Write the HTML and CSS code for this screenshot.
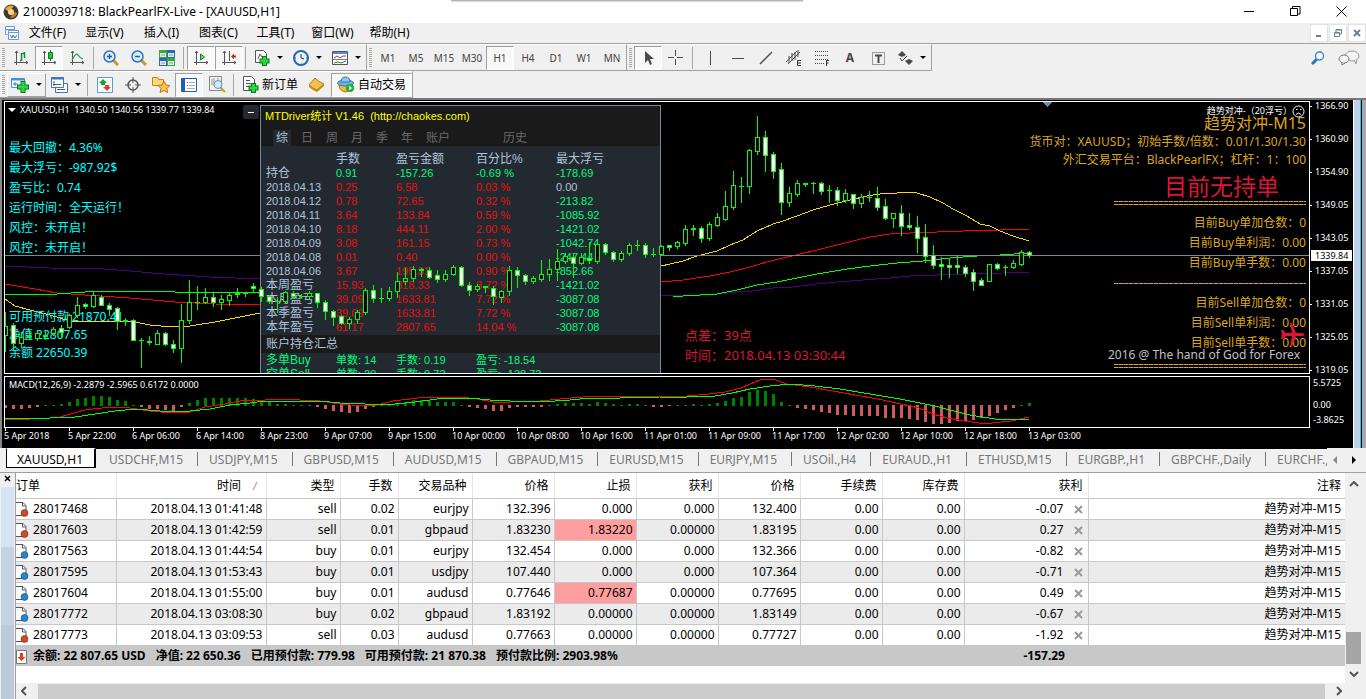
FILE: index.html
```
<!DOCTYPE html>
<html lang="zh-CN">
<head>
    <meta charset="UTF-8">
    <meta name="viewport" content="width=device-width, initial-scale=1.0">
    <title>2100039718: BlackPearlFX-Live - [XAUUSD,H1]</title>
    <link rel="stylesheet" href="styles.css">
</head>
<body>
    <header class="titlebar">
        <svg width="16" height="16" viewBox="0 0 16 16"><circle cx="8" cy="8" r="7.500" fill="#3a3a3a"/><path d="M2 5Q5 0 11 2L6 8Z" fill="#e8a33a"/><path d="M14 9Q13 14 7 14L11 8Z" fill="#c67a1c"/><circle cx="8" cy="8" r="3" fill="#f7d58a"/></svg>
        <span class="caption">2100039718: BlackPearlFX-Live - [XAUUSD,H1]</span>
        <button class="win-btn" aria-label="最小化"><svg width="11" height="11"><path d="M0 5.500h10" stroke="#000"/></svg></button>
        <button class="win-btn" aria-label="还原"><svg width="11" height="11"><path d="M.5 2.500h7v7h-7zM2.500 2v-1.500h7.500v7.500h-2" fill="none" stroke="#000"/></svg></button>
        <button class="win-btn" aria-label="关闭"><svg width="11" height="11"><path d="M.5.5l10 10M10.500.5l-10 10" stroke="#000"/></svg></button>
        <div class="drag-shade"></div>
    </header>

    <nav class="menubar">
        <svg width="14" height="14" viewBox="0 0 14 14"><path d="M.5.5h9v3h-9zM.5 3.500v5h2M3.500 4.500h10v9h-10zM3.500 6.500h10" fill="#fff" stroke="#6a9bd8"/><path d="M5 9l2 3 1-3 2 3 2-3" fill="none" stroke="#3a76c4"/></svg>
        <button>文件(F)</button>
        <button>显示(V)</button>
        <button>插入(I)</button>
        <button>图表(C)</button>
        <button>工具(T)</button>
        <button>窗口(W)</button>
        <button>帮助(H)</button>
        <div class="mdi-btns">
            <button aria-label="最小化子窗口"><svg width="10" height="10"><path d="M2 8h5" stroke="#6c8090" stroke-width="2"/></svg></button>
            <button aria-label="还原子窗口"><svg width="10" height="10"><path d="M1.500 4.500h5v4h-5zM3 4V1.500h5.500V6H7M3 2h6M1 5h6" fill="none" stroke="#6c8090"/></svg></button>
            <button aria-label="关闭子窗口"><svg width="10" height="10"><path d="M2 2l6 6M8 2L2 8" stroke="#6c8090" stroke-width="2"/></svg></button>
        </div>
    </nav>

    <div class="toolbar">
        <div class="group">
            <i class="grip"></i>
            <button class="tool" aria-label="柱状图"><svg width="16" height="16"><path d="M3.500 1v14M1 12.500h14M2 3l1.500-2L5 3M13 11l2 1.500-2 1.500" fill="none" stroke="#555"/><path d="M7 10.500h1.500M8.500 11V3M9 3.500h2M11.500 2v6" fill="none" stroke="#1b8a2f" stroke-width="1.500"/></svg></button>
            <button class="tool on" aria-label="阴阳烛"><svg width="16" height="16"><path d="M3.500 1v14M1 12.500h14M2 3l1.500-2L5 3M13 11l2 1.500-2 1.500" fill="none" stroke="#555"/><path d="M9.500 0v11" stroke="#087a1c"/><path d="M7.500 2.500h4v6h-4z" fill="#25c83c" stroke="#087a1c"/></svg></button>
            <button class="tool" aria-label="折线图"><svg width="16" height="16"><path d="M3.500 1v14M1 12.500h14M2 3l1.500-2L5 3M13 11l2 1.500-2 1.500" fill="none" stroke="#555"/><path d="M3 10Q7 2 9 5t5 4" fill="none" stroke="#2f9d45" stroke-width="1.300"/></svg></button>
            <i class="sep"></i>
            <button class="tool" aria-label="放大"><svg width="16" height="16"><path d="M10 10l5 5" stroke="#c99a1e" stroke-width="3"/><circle cx="6.500" cy="6.500" r="5.500" fill="#d9ecfb" stroke="#2c74c0" stroke-width="1.500"/><path d="M4 6.500h5M6.500 4v5" stroke="#1c5fa8" stroke-width="1.500"/></svg></button>
            <button class="tool" aria-label="缩小"><svg width="16" height="16"><path d="M10 10l5 5" stroke="#c99a1e" stroke-width="3"/><circle cx="6.500" cy="6.500" r="5.500" fill="#d9ecfb" stroke="#2c74c0" stroke-width="1.500"/><path d="M4 6.500h5" stroke="#1c5fa8" stroke-width="1.500"/></svg></button>
            <button class="tool" aria-label="平铺窗口"><svg width="16" height="16"><path d="M0 0h8v8H0zM8 8h8v8H8z" fill="#3fa535"/><path d="M8 0h8v8H8zM0 8h8v8H0z" fill="#2b66c0"/><path d="M1 3h6v4H1zM9 3h6v4H9zM1 11h6v4H1zM9 11h6v4H9z" fill="#d8efe4"/><path d="M2 5h4M10 5h4M2 13h4M10 13h4" stroke="#7aa" /></svg></button>
            <i class="sep"></i>
            <button class="tool on" aria-label="自动滚动"><svg width="16" height="16"><path d="M3.500 1v14M1 12.500h14M2 3l1.500-2L5 3M13 11l2 1.500-2 1.500" fill="none" stroke="#555"/><path d="M7.500 4v6l4-3z" fill="#7ad98a" stroke="#0c7d22"/></svg></button>
            <button class="tool on" aria-label="图表平移"><svg width="16" height="16"><path d="M3.500 1v14M1 12.500h14M2 3l1.500-2L5 3M13 11l2 1.500-2 1.500M8.500 1v10" fill="none" stroke="#555"/><path d="M10 6.500l3-3v2h2v2h-2v2z" fill="#b5341e"/></svg></button>
            <i class="sep"></i>
            <button class="tool drop" aria-label="指标"><svg width="16" height="16"><path d="M1.500.5h8l3 3v9h-11z" fill="#fff" stroke="#555"/><path d="M4 9l2-5 2 3" fill="none" stroke="#555"/><path d="M10.500 6v10M5.500 11h10" stroke="#087a1c" stroke-width="5"/><path d="M10.500 7v8M6.500 11h8" stroke="#2fd446" stroke-width="3"/></svg><b class="caret"></b></button>
            <button class="tool drop" aria-label="周期"><svg width="16" height="16"><circle cx="8" cy="8" r="7" fill="#eef6fd" stroke="#2067b8" stroke-width="2"/><path d="M8 4v4l3 1" fill="none" stroke="#333"/><path d="M2 8h1M13 8h1M8 13h.5" stroke="#555"/></svg><b class="caret"></b></button>
            <button class="tool drop" aria-label="模板"><svg width="16" height="16"><path d="M.5 1.500h15v13H.5z" fill="#fff" stroke="#555"/><path d="M1 3h14" stroke="#4a8fd6" stroke-width="2"/><path d="M2 8l3-2 3 2 3-2 3 0" fill="none" stroke="#a33"/><path d="M2 13l4-1 3 1 5-2" fill="none" stroke="#287a3a"/><path d="M1 9.500h14" stroke="#777"/></svg><b class="caret"></b></button>
        </div>
        <div class="group">
            <i class="grip"></i>
            <button class="tool">M1</button>
            <button class="tool">M5</button>
            <button class="tool">M15</button>
            <button class="tool">M30</button>
            <button class="tool on">H1</button>
            <button class="tool">H4</button>
            <button class="tool">D1</button>
            <button class="tool">W1</button>
            <button class="tool">MN</button>
        </div>
        <div class="group">
            <i class="grip"></i>
            <button class="tool on" aria-label="光标"><svg width="16" height="16"><path d="M5 1v12l3-3 2 5 2-1-2-5h4z" fill="#4a4a4a"/></svg></button>
            <button class="tool" aria-label="十字准线"><svg width="16" height="16"><path d="M7.500 0v6M7.500 9v6M0 7.500h6M9 7.500h6" stroke="#4a4a4a"/></svg></button>
            <i class="sep"></i>
            <button class="tool" aria-label="垂直线"><svg width="16" height="16"><path d="M8.500 1v14" stroke="#4a4a4a"/></svg></button>
            <button class="tool" aria-label="水平线"><svg width="16" height="16"><path d="M2 8.500h12" stroke="#4a4a4a"/></svg></button>
            <button class="tool" aria-label="趋势线"><svg width="16" height="16"><path d="M2 14L14 2" stroke="#4a4a4a" stroke-width="1.300"/></svg></button>
            <button class="tool" aria-label="通道"><svg width="16" height="16"><path d="M0 12L11 1M2 14L14 2M3 6v7M6 3v8M9 2v8M12 0v7" stroke="#4a4a4a"/><path d="M15 10.500h-3.500v5H15M12 13h3" fill="none" stroke="#333"/></svg></button>
            <button class="tool" aria-label="斐波纳契"><svg width="16" height="16"><path d="M1 1.500h14M1 5.500h14M1 9.500h14M1 13.500h9" stroke="#4a4a4a" stroke-dasharray="1 1"/><path d="M15 10.500h-2.500V16M12.500 13h2" fill="none" stroke="#333"/></svg></button>
            <button class="tool letter">A</button>
            <button class="tool" aria-label="文本标签"><svg width="16" height="16"><path d="M2.500 2.500h12v12h-12z" fill="none" stroke="#4a4a4a" stroke-dasharray="1 1"/><path d="M5 5.500h7M8.500 5v8" stroke="#4a4a4a" stroke-width="2"/></svg></button>
            <button class="tool drop" aria-label="箭头"><svg width="16" height="16"><path d="M1 5l4-4 4 4-4 2zM8 11l4-2 4 2-4 4z" fill="#4a4a4a"/><path d="M3 8l2 3 5-5" fill="none" stroke="#4a4a4a"/></svg><b class="caret"></b></button>
        </div>
        <div class="tool-right">
            <svg width="14" height="14"><path d="M1 13l5-5" stroke="#2c74c0" stroke-width="3"/><circle cx="8.500" cy="5" r="4" fill="#fff" stroke="#3a86d8" stroke-width="1.500"/></svg>
            <svg width="22" height="16"><ellipse cx="14" cy="6" rx="7" ry="5" fill="#f5f5f5" stroke="#999"/><path d="M16 10l2 4 1-5" fill="#eee" stroke="#999"/><ellipse cx="6" cy="9" rx="5" ry="4" fill="#f5f5f5" stroke="#777"/><path d="M4 12v3l3-2" fill="#eee" stroke="#777"/></svg>
        </div>
    </div>

    <div class="toolbar">
        <div class="group">
            <i class="grip"></i>
            <button class="tool drop raised" aria-label="新图表"><svg width="18" height="16"><path d="M.5 1.500h13v9H.5z" fill="#fff" stroke="#4a90d9"/><path d="M.5 2.500h13" stroke="#4a90d9" stroke-width="2"/><path d="M4 5v4M2 7h5" stroke="#3a76c4"/><path d="M12 4v12M6 10h12" stroke="#087a1c" stroke-width="5"/><path d="M12 5v10M7 10h10" stroke="#2fd446" stroke-width="3"/></svg><b class="caret"></b></button>
            <button class="tool drop" aria-label="图表配置"><svg width="17" height="16"><path d="M4.500 6.500h12v9h-12z" fill="#fff" stroke="#3a76c4"/><path d="M.5.5h12v10H.5z" fill="#fff" stroke="#3a76c4"/><path d="M0 1.500h13" stroke="#3a76c4" stroke-width="2"/><path d="M3 4v5M2 7.500h8M6 12.500h8" stroke="#557"/></svg><b class="caret"></b></button>
            <i class="sep"></i>
            <button class="tool" aria-label="市场报价"><svg width="16" height="16"><path d="M.5.5h15v15H.5z" fill="#fff" stroke="#5a9bd8"/><path d="M6 2l4 4H8v2H4V6H2z" fill="#1fa035"/><path d="M10 14l-4-4h2V8h4v2h2z" fill="#d24a26"/></svg></button>
            <button class="tool" aria-label="数据窗口"><svg width="16" height="16"><circle cx="8" cy="8" r="5" fill="none" stroke="#555" stroke-width="1.500"/><path d="M8 0v6M8 10v6M0 8h6M10 8h6" stroke="#555"/></svg></button>
            <button class="tool" aria-label="导航"><svg width="18" height="17"><path d="M.5 1.500h5l1 2h5v6H.5z" fill="#fbd873" stroke="#b98a1a"/><path d="M12 5l2 4 4 .5-3 3 .5 4L12 14.500 8 16.500l1-4-3-3 4-.5z" fill="#fbc04d" stroke="#b97a1a"/></svg></button>
            <button class="tool on" aria-label="终端"><svg width="16" height="14"><path d="M.5.5h15v13H.5z" fill="#fff" stroke="#1c5fb8"/><path d="M2.500 1v12" stroke="#1c5fb8" stroke-width="3"/><path d="M6 4.500h1M6 7.500h1" stroke="#d33"/><path d="M8 4.500h6M8 7.500h6M6 10.500h8" stroke="#aab"/></svg></button>
            <button class="tool" aria-label="策略测试"><svg width="17" height="17"><path d="M.5.5h12v14H.5z" fill="#f2f2f2" stroke="#888"/><path d="M3 3v6M5 2v8M9 2v4" stroke="#999"/><path d="M11 11l5 5" stroke="#c99a1e" stroke-width="2"/><circle cx="9" cy="8.500" r="4" fill="#d5eafa" stroke="#5a93c4"/></svg></button>
            <i class="sep"></i>
            <button class="tool text"><svg width="17" height="17"><path d="M1.500.5h8l3 3v11h-11z" fill="#fff" stroke="#555"/><path d="M4 4.500h4M4 7.500h5M4 10.500h3" stroke="#555"/><path d="M11.500 7v10M6.500 12h10" stroke="#087a1c" stroke-width="5"/><path d="M11.500 8v8M7.500 12h8" stroke="#2fd446" stroke-width="3"/></svg>新订单</button>
            <button class="tool" aria-label="MetaEditor"><svg width="16" height="16"><path d="M0 8l6-7q2 3 9 6l-7 6Q3 11 0 8z" fill="#f2c14e" stroke="#a8741a"/><path d="M0 8v2q3 3 8 5l7-6V7l-7 6Q3 11 0 8z" fill="#c98a22"/></svg></button>
            <button class="tool text on"><svg width="18" height="17"><path d="M2 9q0 6 7 7 6-2 7-7z" fill="#f3b92e" stroke="#a8741a"/><ellipse cx="8.500" cy="7" rx="8" ry="3" fill="#6fb3e0" stroke="#3778ad"/><path d="M4 6q0-5 4.500-5T13 6z" fill="#8cc6ea" stroke="#3778ad"/><circle cx="13" cy="12" r="4" fill="#1fae37"/><path d="M12 9.500v5l3-2.500z" fill="#fff"/></svg>自动交易</button>
        </div>
    </div>

    <main class="chart-window">
        <div class="plots">
            <section class="pane main-pane">
                <svg class="layer" id="averages"></svg>

                <div class="symbol-line">XAUUSD,H1&nbsp; 1340.50 1340.56 1339.77 1339.84</div>
                <div class="notes risk">
                    <p>最大回撤：4.36%</p>
                    <p>最大浮亏：-987.92$</p>
                    <p>盈亏比：0.74</p>
                    <p>运行时间：全天运行！</p>
                    <p>风控：未开启！</p>
                    <p>风控：未开启！</p>
                </div>
                <div class="notes funds">
                    <p>可用预付款 21870.41</p>
                    <p>净值 22807.65</p>
                    <p>余额 22650.39</p>
                </div>
                <div class="notes spread">
                    <p>点差：39点</p>
                    <p>时间：2018.04.13 03:30:44</p>
                </div>

                <button class="fold" aria-label="收起"></button>
                <div class="stats">
                    <div class="stats-head">
                        <div class="stats-title">MTDriver统计 V1.46&nbsp; (http://chaokes.com)</div>
                        <div class="stats-tabs">
                            <button class="active">综</button>
                            <button>日</button>
                            <button>周</button>
                            <button>月</button>
                            <button>季</button>
                            <button>年</button>
                            <button class="account">账户</button>
                            <button>历史</button>
                        </div>
                    </div>
                    <table class="stats-table">
                        <colgroup><col class="c1"><col class="c2"><col class="c3"><col class="c3"><col></colgroup>
                        <thead>
                            <tr><th></th><th>手数</th><th>盈亏金额</th><th>百分比%</th><th>最大浮亏</th></tr>
                        </thead>
                        <tbody id="statsRows"></tbody>
                    </table>
                    <div class="stats-section">账户持仓汇总</div>
                    <table class="stats-table sums">
                        <colgroup><col class="c1"><col class="c2"><col class="c3"><col></colgroup>
                        <tbody>
                            <tr><td>多单Buy</td><td>单数: 14</td><td>手数: 0.19</td><td>盈亏: -18.54</td></tr>
                            <tr><td>空单Sell</td><td>单数: 29</td><td>手数: 0.72</td><td>盈亏: -138.72</td></tr>
                        </tbody>
                    </table>
                </div>

                <div class="ea-name">趋势对冲-（20浮亏）<svg width="13" height="13"><circle cx="6.500" cy="6.500" r="5.500" fill="none" stroke="#fff"/><path d="M4 4.500h1.500M8 4.500h1.500M4 9.500q2.500-3 5 0" fill="none" stroke="#fff"/></svg></div>
                <div class="ea-info">
                    <p class="ea-title">趋势对冲-M15</p>
                    <p class="tight">货币对：XAUUSD；初始手数/倍数：0.01/1.30/1.30</p>
                    <p class="tight">外汇交易平台：BlackPearlFX；杠杆：1：100</p>
                    <p class="ea-state">目前无持单</p>
                    <hr class="double">
                    <p>目前Buy单加仓数：0</p>
                    <p>目前Buy单利润：0.00</p>
                    <p>目前Buy单手数：0.00</p>
                    <hr class="single">
                    <p>目前Sell单加仓数：0</p>
                    <p>目前Sell单利润：0.00</p>
                    <p>目前Sell单手数：0.00</p>
                    <p class="ea-copy">2016 @ The hand of God for Forex</p>
                    <hr class="double last">
                </div>
                <svg class="plane" width="24" height="24" viewBox="0 0 24 24"><path d="M24 11.500q-1-1.500-4-1.500h-5L11 0H9l2 10H5L2 7H0l1 4.500L0 16h2l3-3h6L9 23h2l4-10h5q3 0 4-1.500z" fill="#dc143c"/></svg>

                <svg class="layer" id="candles"></svg>
            </section>

            <section class="pane macd-pane">
                <svg class="layer" id="macd"></svg>
                <div class="macd-label">MACD(12,26,9) -2.2879 -2.5965 0.6172 0.0000</div>
            </section>
            <div class="time-axis" id="timeAxis"></div>
        </div>

        <div class="price-axis">
            <ul class="prices">
                <li>1366.90</li>
                <li>1360.90</li>
                <li>1354.90</li>
                <li>1349.05</li>
                <li>1343.05</li>
                <li>1337.05</li>
                <li>1331.05</li>
                <li>1325.05</li>
                <li>1319.05</li>
            </ul>
            <ul class="macd-scale">
                <li>5.5725</li>
                <li class="zero">0.00</li>
                <li>-3.8625</li>
            </ul>
            <div class="price-now">1339.84</div>
        </div>
        <div class="window-edge"></div>
    </main>

    <nav class="chart-tabs">
        <div class="tab-strip">
            <a href="#" class="active">XAUUSD,H1</a>
            <a href="#">USDCHF,M15</a>
            <a href="#">USDJPY,M15</a>
            <a href="#">GBPUSD,M15</a>
            <a href="#">AUDUSD,M15</a>
            <a href="#">GBPAUD,M15</a>
            <a href="#">EURUSD,M15</a>
            <a href="#">EURJPY,M15</a>
            <a href="#">USOil.,H4</a>
            <a href="#">EURAUD.,H1</a>
            <a href="#">ETHUSD,M15</a>
            <a href="#">EURGBP.,H1</a>
            <a href="#">GBPCHF.,Daily</a>
            <a href="#">EURCHF.,H1</a>
        </div>
        <button class="tab-nav dim" aria-label="向左"><svg width="8" height="8"><path d="M5 0v8L1 4z" fill="#888"/></svg></button>
        <button class="tab-nav" aria-label="向右"><svg width="8" height="8"><path d="M2 0v8l4-4z" fill="#000"/></svg></button>
    </nav>

    <section class="terminal">
        <aside class="terminal-side">
            <button aria-label="关闭终端"><svg width="7" height="7"><path d="M1 1l5 5M6 1L1 6" stroke="#000" stroke-width="1.500"/></svg></button>
            <div class="side-fill"></div>
        </aside>
        <div class="terminal-body">
            <div class="orders-wrap">
                <table class="orders">
                    <colgroup>
                        <col class="w-order"><col class="w-time"><col class="w-type"><col class="w-lots"><col class="w-symbol">
                        <col class="w-num"><col class="w-num"><col class="w-num"><col class="w-num"><col class="w-num"><col class="w-num">
                        <col class="w-profit"><col>
                    </colgroup>
                    <thead>
                        <tr><th class="first">订单</th><th class="sorted">时间<i>/</i></th><th>类型</th><th>手数</th><th>交易品种</th><th>价格</th><th>止损</th><th>获利</th><th>价格</th><th>手续费</th><th>库存费</th><th>获利</th><th>注释</th></tr>
                    </thead>
                    <tbody id="orderRows"></tbody>
                    <tfoot>
                        <tr>
                            <td colspan="11" class="first"><svg width="11" height="14"><path d="M.5.5h10v13H.5z" fill="#fff" stroke="#777"/><path d="M4 3h3v4h2.500L5.500 11 1.500 7H4z" fill="#d9401c"/></svg><span>余额: 22 807.65 USD</span><span>净值: 22 650.36</span><span>已用预付款: 779.98</span><span>可用预付款: 21 870.38</span><span>预付款比例: 2903.98%</span></td>
                            <td class="profit">-157.29</td>
                            <td></td>
                        </tr>
                    </tfoot>
                </table>
                <div class="vscroll">
                    <svg width="10" height="6"><path d="M1 5l4-4 4 4" fill="none" stroke="#555" stroke-width="2"/></svg>
                    <i class="vthumb"></i>
                    <svg width="10" height="6"><path d="M1 1l4 4 4-4" fill="none" stroke="#555" stroke-width="2"/></svg>
                </div>
            </div>
            <div class="hscroll">
                <svg width="6" height="10"><path d="M5 1L1 5l4 4" fill="none" stroke="#555" stroke-width="2"/></svg>
                <i class="hthumb"></i>
                <svg width="6" height="10"><path d="M1 1l4 4-4 4" fill="none" stroke="#555" stroke-width="2"/></svg>
            </div>
        </div>
    </section>

    <script src="chart.js"></script>
</body>
</html>
```
FILE: styles.css
```
* {
    box-sizing: border-box;
}
body {
    margin: 0;
    min-height: 100vh;
    display: flex;
    flex-direction: column;
    background-color: #f0f0f0;
    font-family: "Noto Sans", "Noto Sans CJK SC", sans-serif;
    font-size: 12px;
    line-height: 16px;
    color: #000;
    overflow: hidden;
}
button {
    padding: 0;
    border: none;
    background: none;
    font: inherit;
    color: inherit;
}
p, ul {
    margin: 0;
    padding: 0;
    list-style: none;
}
svg {
    display: block;
    flex: none;
}

/* 标题栏和菜单 */
.titlebar {
    position: relative;
    display: flex;
    align-items: center;
    height: 23px;
    padding: 0 2px 0 3px;
    background-color: #fff;
}
.caption {
    flex: 1;
    padding-left: 4px;
}
.win-btn {
    display: flex;
    justify-content: center;
    align-items: center;
    width: 46px;
    height: 20px;
}
.drag-shade {
    position: absolute;
    top: 0;
    left: 33%;
    width: 352px;
    height: 2px;
    background-color: #b4b4b4;
    border-bottom: 1px solid #dcdcdc;
}
.menubar {
    display: flex;
    align-items: center;
    height: 21px;
    padding-left: 5px;
    border-bottom: 1px solid #a0a0a0;
}
.menubar > button {
    width: 57px;
    white-space: nowrap;
}
.mdi-btns {
    display: flex;
    margin-left: auto;
    gap: 1px;
}
.mdi-btns button {
    display: flex;
    justify-content: center;
    align-items: center;
    width: 18px;
    height: 18px;
    background-color: #fff;
    border: 1px solid #e3e3e3;
}

/* 工具栏 */
.toolbar {
    display: flex;
    height: 27px;
}
.group {
    display: flex;
    align-items: center;
    border-right: 1px solid #a0a0a0;
    border-bottom: 1px solid #a0a0a0;
    border-top: 1px solid #fff;
}
.grip {
    width: 3px;
    height: 20px;
    margin: 0 2px;
    background: repeating-linear-gradient(#a8a8a8 0 1px, #f0f0f0 1px 2px);
}
.sep {
    width: 1px;
    height: 22px;
    margin: 0 3px 0 2px;
    background-color: #a8a8a8;
}
.tool {
    display: flex;
    justify-content: center;
    align-items: center;
    width: 28px;
    height: 24px;
    font-size: 10px;
    color: #444;
}
.tool.on {
    background-color: #f8f8f8;
    border: 1px solid #a0a0a0;
    border-right-color: #fff;
    border-bottom-color: #fff;
}
.tool.raised {
    border: 1px solid #fff;
    border-right-color: #a0a0a0;
    border-bottom-color: #a0a0a0;
}
.tool.drop {
    width: 39px;
    gap: 7px;
}
.tool.letter {
    font-size: 12px;
    font-weight: bold;
}
.tool.text {
    width: auto;
    padding: 0 5px;
    gap: 3px;
    font-size: 12px;
    color: #000;
}
.caret {
    border: 3px solid transparent;
    border-top-color: #000;
    border-bottom: none;
}
.tool-right {
    display: flex;
    align-items: center;
    gap: 13px;
    margin-left: auto;
    padding-right: 6px;
}

/* 图表窗口 */
.chart-window {
    display: flex;
    height: 350px;
    background-color: #000;
    border-top: 2px solid #777;
    border-left: 2px solid #888;
    color: #fff;
    font-size: 9px;
    line-height: 12px;
}
.plots {
    flex: 1;
    min-width: 0;
    padding: 1px 0 0 2px;
}
.pane {
    position: relative;
    border: 1px solid #fff;
    overflow: hidden;
}
.main-pane {
    height: 273px;
}
.macd-pane {
    height: 52px;
    margin-top: 2px;
}
.layer {
    position: absolute;
    top: 0;
    left: 0;
    width: 100%;
    height: 100%;
    pointer-events: none;
    shape-rendering: crispEdges;
}
.symbol-line {
    position: absolute;
    top: 2px;
    left: 15px;
    white-space: nowrap;
}
.symbol-line::before {
    content: "";
    position: absolute;
    left: -12px;
    top: 4px;
    border: 4px solid transparent;
    border-top-color: #fff;
    border-bottom: none;
}
.macd-label {
    position: absolute;
    top: 2px;
    left: 4px;
}
.notes {
    position: absolute;
    left: 4px;
    font-size: 12px;
    line-height: 20px;
    color: #00ffff;
    white-space: nowrap;
}
.risk {
    top: 36px;
}
.funds {
    top: 206px;
    line-height: 18px;
}
.spread {
    top: 223px;
    left: 680px;
    font-size: 13px;
    color: #dc143c;
}

/* 统计面板 */
.fold {
    position: absolute;
    top: 3px;
    left: 238px;
    width: 16px;
    height: 14px;
    background-color: #232930;
    border-radius: 2px;
}
.fold::before {
    content: "";
    display: block;
    width: 6px;
    height: 1px;
    margin: 0 auto;
    background-color: #fff;
}
.stats {
    position: absolute;
    top: 3px;
    bottom: 0;
    left: 255px;
    width: 401px;
    overflow: hidden;
    background-color: #232930;
    border: 1px solid #778899;
    border-bottom: none;
    font-family: "Liberation Sans", "Noto Sans CJK SC", sans-serif;
    font-size: 11px;
    line-height: 14px;
    color: #b0c4de;
}
.stats-head {
    height: 40px;
    padding-left: 4px;
    background-color: #1a1a1a;
}
.stats-title {
    height: 24px;
    padding-top: 3px;
    color: #ffff00;
}
.stats-tabs {
    display: flex;
    gap: 7px;
    padding-left: 8px;
    font-size: 12px;
    color: #696969;
}
.stats-tabs button {
    padding: 1px 3px;
    line-height: 14px;
}
.stats-tabs .active {
    background-color: #232930;
    color: #b0c4de;
}
.stats-tabs .account {
    margin-right: 40px;
}
.stats-table {
    width: 100%;
    margin-top: 6px;
    table-layout: fixed;
    border-collapse: collapse;
}
.stats-table th,
.stats-table td {
    height: 14px;
    padding: 0 0 0 5px;
    text-align: left;
    font-weight: normal;
    white-space: nowrap;
}
.stats-table th,
.stats-table td:first-child {
    font-size: 12px;
}
.stats-table .date {
    font-size: 11px;
}
.c1 { width: 70px; }
.c2 { width: 60px; }
.c3 { width: 80px; }
.up { color: #e81010; }
.down { color: #00fa7a; }
.stats-section {
    height: 18px;
    margin-top: 1px;
    padding-left: 5px;
    font-size: 12px;
    line-height: 18px;
    background-color: #1a1a1a;
}
.stats-table.sums {
    margin-top: 0;
    color: #00fa7a;
}

/* EA 信息 */
.ea-name {
    position: absolute;
    top: 2px;
    right: 4px;
    display: flex;
    align-items: center;
    font-size: 9px;
    line-height: 14px;
}
.ea-info {
    position: absolute;
    top: 11px;
    right: 3px;
    font-size: 12px;
    line-height: 20px;
    text-align: right;
    color: #daa520;
}
.ea-info .ea-title {
    font-size: 16px;
}
.ea-info .tight {
    line-height: 18px;
}
.ea-info .ea-state {
    height: 32px;
    padding-right: 27px;
    font-size: 23px;
    line-height: 35px;
    color: #dc143c;
}
.ea-info .ea-copy {
    margin-top: -4px;
    padding-right: 6px;
    font-size: 12px;
    line-height: 12px;
    color: #c0c0c0;
}
.ea-info hr {
    width: 192px;
    height: 1px;
    margin: 0 0 9px auto;
    border: none;
    background: repeating-linear-gradient(90deg, #daa520 0 4px, #7a5c12 4px 5px);
}
.ea-info .double {
    height: 4px;
    margin-bottom: 8px;
    border: none;
    background:
        linear-gradient(transparent 0 1px, #000 1px 3px, transparent 3px),
        repeating-linear-gradient(90deg, #daa520 0 4px, #7a5c12 4px 5px);
}
.ea-info .single {
    margin-top: 10px;
}
.ea-info .last {
    margin: 3px 0 0 auto;
}
.plane {
    position: absolute;
    right: 4px;
    top: 221px;
}

/* 坐标轴 */
.time-axis {
    display: flex;
    height: 20px;
    overflow: hidden;
}
.time-axis span {
    position: relative;
    flex: none;
    width: 64px;
    padding-top: 2px;
    white-space: nowrap;
}
.time-axis span::before {
    content: "";
    position: absolute;
    left: 1px;
    top: 0;
    height: 3px;
    border-left: 1px solid #fff;
}
.price-axis {
    position: relative;
    width: 43px;
}
.prices li {
    position: relative;
    margin-bottom: 21px;
    padding-left: 5px;
}
.prices li::before {
    content: "";
    position: absolute;
    left: 0;
    top: 6px;
    width: 2px;
    height: 1px;
    background-color: #fff;
}
.macd-scale {
    margin-top: -20px;
    padding-left: 3px;
}
.macd-scale .zero {
    margin: 10px 0 3px;
}
.price-now {
    position: absolute;
    top: 150px;
    left: 1px;
    right: 1px;
    height: 11px;
    padding-left: 4px;
    line-height: 11px;
    color: #000;
    background-color: #fff;
}
.window-edge {
    width: 13px;
    background-color: #b9d1ea;
    border-left: 1px solid #fff;
    border-right: 4px solid #a9a9a9;
    box-shadow: inset -1px 0 #000, inset -2px 0 #27c5ee;
}

/* 图表标签 */
.chart-tabs {
    display: flex;
    align-items: center;
    height: 25px;
    padding: 0 3px 0 6px;
    border-bottom: 1px solid #a0a0a0;
}
.tab-strip {
    display: flex;
    flex: 1;
    min-width: 0;
    height: 23px;
    align-self: flex-start;
    overflow: hidden;
}
.tab-strip a {
    position: relative;
    flex: none;
    height: 20px;
    padding: 0 13px;
    line-height: 21px;
    color: #777;
    text-decoration: none;
    border-top: 1px solid #000;
}
.tab-strip a + a + a::before {
    content: "";
    position: absolute;
    left: 1px;
    top: 3px;
    height: 14px;
    border-left: 1px solid #777;
}
.tab-strip .active {
    color: #000;
    background-color: #fff;
    border: 1px solid #000;
    border-top-color: #fff;
    border-right-width: 2px;
    padding: 0 11px 0 10px;
}
.tab-nav {
    width: 18px;
    display: flex;
    justify-content: center;
}

/* 终端 */
.terminal {
    display: flex;
    flex: 1;
}
.terminal-side {
    display: flex;
    flex-direction: column;
    width: 15px;
}
.terminal-side button {
    padding: 2px 0 5px 4px;
}
.side-fill {
    flex: 1;
    margin: 0 1px;
    background: linear-gradient(#d6e3f3 0 60px, #c4d3e2 60px 138px, #bccbda 138px);
}
.terminal-body {
    display: flex;
    flex-direction: column;
    flex: 1;
    min-width: 0;
    border-left: 1px solid #a0a0a0;
    padding-right: 4px;
}
.orders-wrap {
    display: flex;
    flex: 1;
    background-color: #fff;
}
.orders {
    flex: 1;
    width: 100%;
    table-layout: fixed;
    border-collapse: collapse;
    align-self: flex-start;
}
.orders th,
.orders td {
    height: 21px;
    padding: 0 3px;
    text-align: right;
    white-space: nowrap;
    border-right: 1px solid #c8c8c8;
    border-bottom: 1px solid #c8c8c8;
}
.orders th {
    height: 25px;
    padding: 1px 5px 0 3px;
    font-weight: normal;
    border-right-color: #e5e5e5;
}
.orders .first {
    text-align: left;
    padding-left: 0;
}
.orders .sorted i {
    padding: 0 4px 0 12px;
    font-size: 10px;
    color: #888;
}
.orders th:last-child,
.orders td:last-child {
    padding-right: 4px;
    border-right: none;
}
.orders tbody tr:nth-child(even) {
    background-color: #ebebeb;
}
.orders .first svg {
    display: inline-block;
    margin-right: 4px;
    vertical-align: -4px;
}
.orders .hit {
    background-color: #ff9e9e;
}
.orders .profit {
    padding-right: 23px;
}
.orders .open {
    padding-right: 4px;
}
.orders .open button {
    margin-left: 9px;
    padding: 0 1px;
    vertical-align: -1px;
}
.orders tfoot td {
    border: none;
    font-weight: bold;
    background-color: #c8c8c8;
}
.orders tfoot .first svg {
    margin-right: 6px;
}
.orders tfoot span {
    margin-right: 10px;
}
.w-order { width: 100px; }
.w-time { width: 150px; }
.w-type { width: 74px; }
.w-lots { width: 58px; }
.w-symbol { width: 74px; }
.w-num { width: 82px; }
.w-profit { width: 124px; }
.vscroll {
    display: flex;
    flex-direction: column;
    align-items: center;
    justify-content: space-between;
    width: 17px;
    padding: 8px 0 6px;
    background-color: #f0f0f0;
}
.vthumb {
    width: 15px;
    height: 32px;
    margin: auto 0 7px;
    background-color: #a6a6a6;
}
.hscroll {
    display: flex;
    align-items: center;
    gap: 11px;
    height: 16px;
    padding: 0 20px 0 5px;
}
.hthumb {
    flex: 1;
    height: 15px;
    background-color: #cdcdcd;
}
```
FILE: chart.js
```
// 每根K线: [最高, 实体上沿, 实体下沿, 最低, 类型]  1=阳线 0=阴线
const STEP = 8;
const candles = [
    [214,228,237,253,1],[225,227,245,251,0],[234,239,245,249,1],[232,238,238,241,1],[232,235,240,242,1],[233,237,238,241,1],
    [229,231,235,237,1],[227,230,234,239,0],[216,217,229,230,1],[199,207,217,219,1],[205,206,208,210,0],[193,197,208,209,1],
    [197,199,207,207,0],[205,207,211,217,0],[209,210,223,231,0],[220,222,223,227,1],[221,222,242,242,0],[240,242,242,269,1],
    [238,243,244,246,1],[232,235,246,246,1],[234,235,246,247,0],[242,246,250,254,0],[206,222,250,264,1],[182,204,222,225,1],
    [188,204,204,211,1],[190,199,204,205,1],[195,199,204,208,0],[197,201,204,211,1],[195,197,202,207,1],[190,195,196,199,1],
    [194,195,195,198,1],[185,188,190,193,0],[189,191,198,203,0],[197,198,203,205,0],[199,203,203,214,1],[193,194,203,205,1],
    [193,195,198,200,0],[196,198,198,200,1],[193,195,198,200,1],[195,195,204,209,0],[202,204,213,221,0],[212,213,219,227,0],
    [217,218,225,226,0],[219,221,225,230,1],[212,214,221,225,1],[190,192,214,216,1],[187,192,200,204,0],[190,200,200,204,1],
    [189,193,200,202,1],[174,183,193,199,1],[170,180,183,186,1],[168,171,180,183,1],[170,171,172,178,1],[169,172,179,180,0],
    [172,177,181,184,0],[172,176,181,183,1],[167,169,176,177,1],[168,169,187,188,0],[184,187,192,197,0],[186,188,191,193,1],
    [188,188,189,194,1],[188,190,198,206,0],[192,193,199,204,1],[168,172,193,197,1],[169,172,177,189,0],[176,177,183,186,0],
    [178,180,183,185,1],[162,176,181,183,1],[161,171,176,182,1],[151,163,171,182,1],[155,158,163,165,1],[156,159,165,179,0],
    [155,159,165,166,1],[144,160,162,165,0],[145,146,163,165,1],[145,146,154,156,0],[153,154,161,163,0],[153,155,161,163,1],
    [145,147,155,157,1],[142,147,147,152,1],[145,147,156,159,0],[150,156,156,158,1],[147,148,156,157,1],[147,147,149,152,0],
    [143,144,148,150,1],[127,131,145,147,1],[127,130,131,137,1],[128,130,140,144,0],[124,126,140,142,1],[115,119,127,128,1],
    [93,108,121,122,1],[73,87,109,111,1],[79,88,88,104,1],[51,52,88,95,1],[18,39,53,56,1],[33,39,57,73,0],
    [54,56,73,80,0],[65,71,104,116,0],[89,95,104,108,1],[82,85,96,98,1],[85,85,86,88,0],[84,85,85,95,1],
    [84,85,93,96,0],[87,92,92,104,1],[89,92,102,107,0],[91,95,102,104,1],[96,96,105,110,0],[96,99,105,109,1],
    [93,99,99,103,1],[89,100,109,112,0],[101,108,120,121,0],[115,115,120,129,1],[107,115,128,137,0],[115,127,129,131,0],
    [118,129,140,154,0],[126,139,158,164,0],[147,157,167,170,0],[159,166,168,181,0],[161,167,169,179,0],[158,167,169,175,0],
    [167,169,175,178,0],[171,174,183,192,0],[180,182,187,187,0],[166,166,183,183,1],[165,166,170,171,0],[167,169,169,177,1],
    [162,165,169,170,1],[152,154,166,167,1],[153,154,157,159,0]
];

const averages = [
    ['#4b0082', '5,168 27,169 50,170 105,171 130,173 165,176 210,179 260,181 400,187 560,194 661,198 703,197 720,196 737,194 753,193 773,190 793,189 817,186 837,184 863,182 890,180 910,178 937,177 970,176 1003,175 1029,174'],
    ['#ff0000', '5,186 35,191 57,195 85,197 130,200 175,204 215,206 260,207 400,205 560,195 661,184 683,182 710,178 730,174 750,169 767,164 783,160 800,156 817,152 837,147 857,142 870,139 890,136 910,135 937,134 963,133 1000,132 1029,131'],
    ['#00ff00', '5,196 57,196 85,194 110,193 170,193 175,194 260,194 400,196 560,198 661,199 673,199 683,198 700,197 717,196 737,192 757,187 777,184 797,180 817,176 847,171 870,168 897,165 923,163 950,160 977,158 1000,157 1029,155'],
    ['#ffd700', '5,201 15,208 30,212 50,217 70,223 85,224 110,223 135,224 150,227 172,229 190,228 215,224 235,220 260,215 400,204 560,190 661,168 670,166 683,163 697,158 717,153 730,147 743,142 757,133 773,126 783,123 797,118 813,112 830,107 850,102 867,98 880,96 897,95 907,94 917,95 930,99 943,105 953,111 967,118 980,126 990,128 1000,133 1013,138 1029,143']
];

const histogram = [
    -3,-4,-4,-3,-2,1,1,2,4,7,8,10,10,9,6,5,1,-2,-4,-4,-5,-6,-2,3,6,8,8,8,8,8,8,7,6,4,2,2,1,1,1,
    -2,-4,-6,-7,-8,-7,-4,-2,1,2,3,4,6,6,5,4,4,4,1,-2,-3,-4,-6,-6,-3,-2,-2,-2,-2,1,2,3,3,3,2,4,3,2,1,2,2,1,
    -2,-2,-1,1,1,2,1,2,3,5,8,9,14,16,15,12,4,1,-3,-4,-5,-7,-8,-10,-10,-11,-11,-11,-11,-13,-13,-13,-14,-15,-17,
    -19,-19,-18,-16,-16,-15,-13,-11,-8,-5,-3,1,3
];

const signals = [
    ['#ff0000', '5,321 30,321 50,320 60,319 85,312 110,309 130,310 150,313 172,315 190,314 205,309 225,306 245,302 265,302 285,301 300,302 320,303 340,306 360,308 377,307 393,303 410,301 427,299 460,299 477,301 493,304 510,304 540,303 560,301 583,299 593,298 650,298 687,298 709,296 725,294 741,290 750,286 760,282 773,281 787,286 810,289 833,293 855,297 878,301 901,306 919,310 933,316 947,320 965,323 979,325 992,325 1011,323 1029,319'],
    ['#00ff00', '5,320 50,320 75,319 95,316 115,313 135,311 160,313 190,313 210,311 230,307 250,305 265,303 320,303 340,305 365,306 395,306 415,304 430,302 445,300 470,300 490,302 510,303 540,304 570,302 590,300 620,300 660,299 687,299 715,298 732,295 750,291 770,288 790,286 815,288 840,291 870,296 900,301 925,306 935,308 950,312 970,317 995,321 1011,322 1029,321']
];

const polyline = ([color, points]) => `<polyline points="${points}" fill="none" stroke="${color}"/>`;

function drawAverages() {
    const svg = document.getElementById('averages');
    svg.innerHTML = `<g transform="translate(-5,-4)">
        ${averages.map(polyline).join('')}
        <path d="M0 157.5H3000" stroke="#778899"/>
        <path d="M1042 4h10l-5 5z" fill="#778899"/>
    </g>`;
}

function drawCandles() {
    let out = '';
    candles.forEach(([high, top, bottom, low, rising], i) => {
        const x = i * STEP;
        out += `<path d="M${x + 0.5} ${high}V${low + 1}" stroke="#00ff00"/>`;
        if (bottom - top < 2) {
            out += `<rect x="${x - 2}" y="${top}" width="5" height="${bottom - top + 1}" fill="#00ff00"/>`;
        } else {
            out += `<rect x="${x - 1.5}" y="${top + 0.5}" width="4" height="${bottom - top}" fill="${rising ? '#000' : '#fff'}" stroke="#00ff00"/>`;
        }
    });
    document.getElementById('candles').innerHTML = `<g transform="translate(0,-4)">${out}</g>`;
}

function drawMacd() {
    const zero = 307;
    const bars = histogram.map((v, i) => {
        const y = v > 0 ? zero - v + 1 : zero;
        return `<rect x="${4 + i * STEP}" y="${y}" width="3" height="${Math.abs(v)}" fill="${v > 0 ? '#008000' : '#cd5c5c'}"/>`;
    }).join('');
    document.getElementById('macd').innerHTML =
        `<g transform="translate(-5,-279)">${bars}${signals.map(polyline).join('')}</g>`;
}

const times = ['5 Apr 2018', '5 Apr 22:00', '6 Apr 06:00', '6 Apr 14:00', '8 Apr 23:00', '9 Apr 07:00', '9 Apr 15:00',
    '10 Apr 00:00', '10 Apr 08:00', '10 Apr 16:00', '11 Apr 01:00', '11 Apr 09:00', '11 Apr 17:00', '12 Apr 02:00',
    '12 Apr 10:00', '12 Apr 18:00', '13 Apr 03:00'];

const stats = [
    ['持仓', '0.91', '-157.26', '-0.69 %', '-178.69'],
    ['2018.04.13', '0.25', '6.58', '0.03 %', '0.00'],
    ['2018.04.12', '0.78', '72.65', '0.32 %', '-213.82'],
    ['2018.04.11', '3.64', '133.84', '0.59 %', '-1085.92'],
    ['2018.04.10', '8.18', '444.11', '2.00 %', '-1421.02'],
    ['2018.04.09', '3.08', '161.15', '0.73 %', '-1042.74'],
    ['2018.04.08', '0.01', '0.40', '0.00 %', '-247.44'],
    ['2018.04.06', '3.67', '195.31', '0.90 %', '-852.66'],
    ['本周盈亏', '15.93', '818.33', '3.72 %', '-1421.02'],
    ['本月盈亏', '39.09', '1633.81', '7.72 %', '-3087.08'],
    ['本季盈亏', '39.09', '1633.81', '7.72 %', '-3087.08'],
    ['本年盈亏', '61.17', '2807.65', '14.04 %', '-3087.08']
];

const orders = [
    ['28017468', '01:41:48', 'sell', '0.02', 'eurjpy', '132.396', '0.000', '0.000', '132.400', '-0.07'],
    ['28017603', '01:42:59', 'sell', '0.01', 'gbpaud', '1.83230', '1.83220', '0.00000', '1.83195', '0.27'],
    ['28017563', '01:44:54', 'buy', '0.01', 'eurjpy', '132.454', '0.000', '0.000', '132.366', '-0.82'],
    ['28017595', '01:53:43', 'buy', '0.01', 'usdjpy', '107.440', '0.000', '0.000', '107.364', '-0.71'],
    ['28017604', '01:55:00', 'buy', '0.01', 'audusd', '0.77646', '0.77687', '0.00000', '0.77695', '0.49'],
    ['28017772', '03:08:30', 'buy', '0.02', 'gbpaud', '1.83192', '0.00000', '0.00000', '1.83149', '-0.67'],
    ['28017773', '03:09:53', 'sell', '0.03', 'audusd', '0.77663', '0.00000', '0.00000', '0.77727', '-1.92']
];

function fillStats() {
    document.getElementById('statsRows').innerHTML = stats.map(([name, ...cells]) => {
        const color = cells[1].startsWith('-') ? 'down' : 'up';
        const last = cells[3] === '0.00' ? '' : 'down';
        const label = name.startsWith('2018') ? `<span class="date">${name}</span>` : name;
        return `<tr><td>${label}</td><td class="${color}">${cells[0]}</td><td class="${color}">${cells[1]}</td>` +
            `<td class="${color}">${cells[2]}</td><td class="${last}">${cells[3]}</td></tr>`;
    }).join('');
}

function fillOrders() {
    document.getElementById('orderRows').innerHTML = orders.map(o => {
        const dot = o[2] === 'sell' ? '#d9451c' : '#1c86e0';
        const hit = parseFloat(o[6]) > 0 ? 'hit' : '';
        return `<tr>
            <td class="first"><svg width="13" height="15"><path d="M0 .5h7l3 3v10H0" fill="#fff" stroke="#555"/><path d="M6.500 1v3h3" fill="none" stroke="#555"/><circle cx="8.500" cy="11" r="3.500" fill="${dot}" stroke="#333" stroke-width=".5"/></svg>${o[0]}</td>
            <td>2018.04.13 ${o[1]}</td><td>${o[2]}</td><td>${o[3]}</td><td>${o[4]}</td><td>${o[5]}</td>
            <td class="${hit}">${o[6]}</td><td>${o[7]}</td><td>${o[8]}</td><td>0.00</td><td>0.00</td>
            <td class="open">${o[9]}<button aria-label="平仓"><svg width="9" height="9"><path d="M1 1l7 7M8 1L1 8" stroke="#999" stroke-width="2"/></svg></button></td>
            <td>趋势对冲-M15</td>
        </tr>`;
    }).join('');
}

drawAverages();
drawCandles();
drawMacd();
document.getElementById('timeAxis').innerHTML = times.map(t => `<span>${t}</span>`).join('');
fillStats();
fillOrders();
```
